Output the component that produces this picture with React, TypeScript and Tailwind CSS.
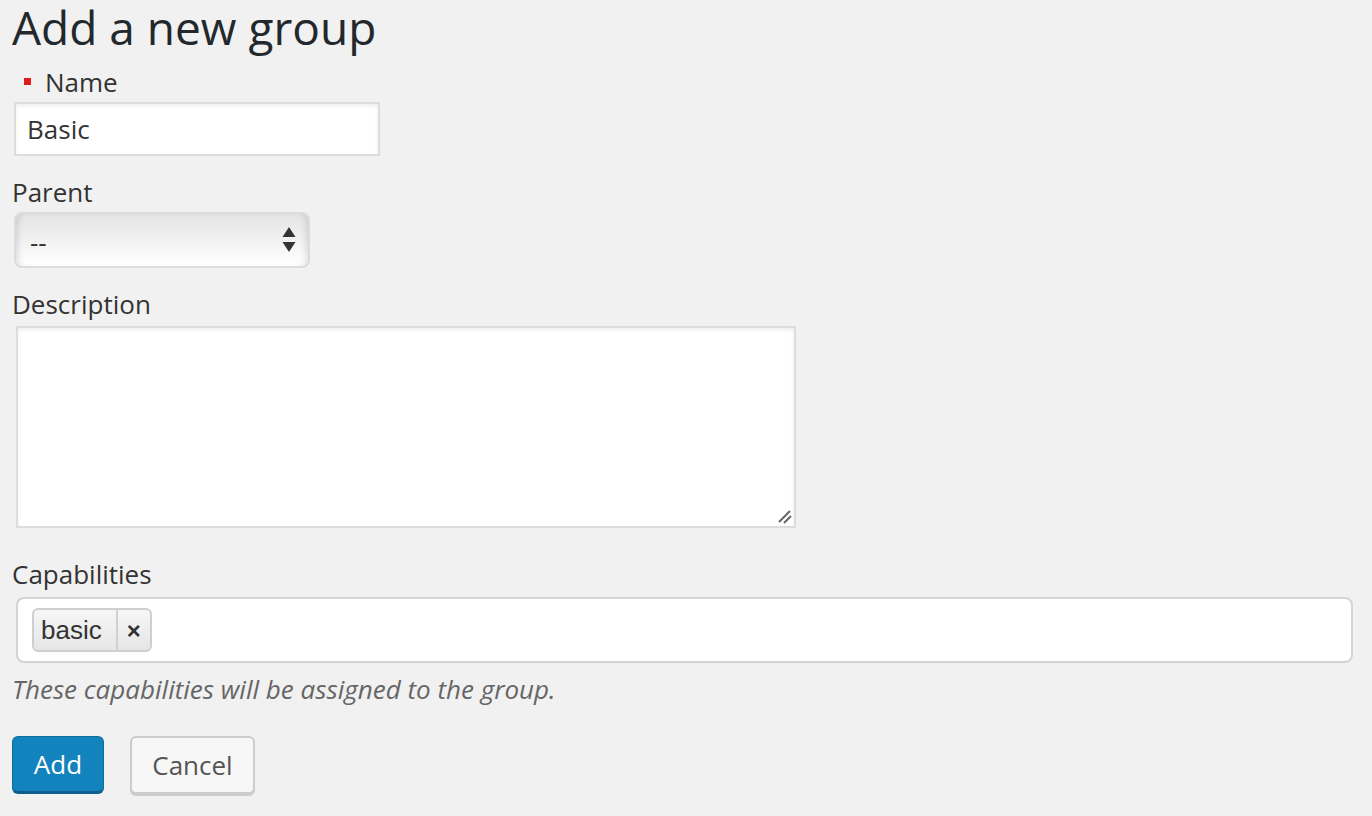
import React from "react";

const FONT = "font-['Open_Sans',sans-serif]";

function Label({ children, required }: { children: React.ReactNode; required?: boolean }) {
  return (
    <label className="flex items-center h-[36px] text-[26px] leading-[36px] text-[#333]">
      {required && <span className="ml-[12px] mr-[14px] w-[7px] h-[7px] bg-[#e01b1b] mt-[-2px]" />}
      {children}
    </label>
  );
}

function SelectArrows() {
  return (
    <svg width="14" height="26" viewBox="0 0 14 26" className="text-[#333]">
      <path d="M7 0 L13.5 10 L0.5 10 Z" fill="currentColor" />
      <path d="M0.5 15 L13.5 15 L7 25 Z" fill="currentColor" />
    </svg>
  );
}

export default function App() {
  return (
    <div className={`${FONT} min-h-[816px] bg-[#f1f1f1] pl-[12px] text-[#333]`}>
      <h1 className="text-[46px] leading-[55px] text-[#23282d] font-normal m-0">Add a new group</h1>

      <div className="mt-[9px]">
        <Label required>Name</Label>
        <input
          defaultValue="Basic"
          className={`${FONT} mt-[2px] ml-[2px] block w-[366px] h-[54px] border-2 border-[#dddddd] bg-white px-[11px] text-[26px] text-[#333] shadow-[inset_0_2px_4px_rgba(0,0,0,0.07)] outline-none`}
        />
      </div>

      <div className="mt-[18px]">
        <Label>Parent</Label>
        <div className="mt-[2px] ml-[2px] w-[296px] h-[56px] flex items-center justify-between rounded-[8px] border-2 border-[#dcdcdc] bg-[linear-gradient(#e4e4e4,#ffffff)] shadow-[inset_6px_0_6px_-4px_rgba(0,0,0,0.12),inset_-6px_0_6px_-4px_rgba(0,0,0,0.12)] pl-[14px] pr-[12px]">
          <span className="text-[26px] leading-none text-[#333] mt-[4px]">--</span>
          <SelectArrows />
        </div>
      </div>

      <div className="mt-[18px]">
        <Label>Description</Label>
        <div className="relative mt-[4px] ml-[4px] w-[780px] h-[202px] border-2 border-[#dddddd] bg-white shadow-[inset_0_2px_4px_rgba(0,0,0,0.07)]">
          <svg width="14" height="14" viewBox="0 0 14 14" className="absolute right-[2px] bottom-[2px]">
            <path d="M1 12 L12 1 M6 13 L13 6" stroke="#666" strokeWidth="2" />
          </svg>
        </div>
      </div>

      <div className="mt-[28px]">
        <Label>Capabilities</Label>
        <div className="mt-[5px] ml-[4px] w-[1337px] h-[66px] rounded-[8px] border-2 border-[#d4d4d4] bg-white flex items-center pl-[14px]">
          <div className="flex h-[44px] items-stretch rounded-[6px] border-2 border-[#cfcfcf] bg-[linear-gradient(#f6f6f6,#e6e6e6)] font-['Liberation_Sans',Arial,sans-serif]">
            <span className="flex items-center pl-[7px] pr-[14px] text-[26px] text-[#333]">basic</span>
            <span className="w-[2px] bg-[#d0d0d0]" />
            <span className="flex items-center justify-center w-[32px] text-[24px] font-bold text-[#333] pt-[2px]">×</span>
          </div>
        </div>
      </div>

      <p className="mt-[8px] text-[26px] leading-[36px] italic text-[#666]">These capabilities will be assigned to the group.</p>

      <div className="mt-[29px] flex gap-[26px]">
        <button className={`${FONT} w-[92px] h-[58px] rounded-[6px] bg-[#1283bd] border border-[#0f6d9e] border-b-[3px] border-b-[#0b5f8a] text-white text-[26px]`}>
          Add
        </button>
        <button className={`${FONT} w-[125px] h-[58px] rounded-[6px] bg-[#f7f7f7] border-2 border-[#cccccc] shadow-[0_2px_0_#cccccc] text-[#555] text-[26px]`}>
          Cancel
        </button>
      </div>
    </div>
  );
}
